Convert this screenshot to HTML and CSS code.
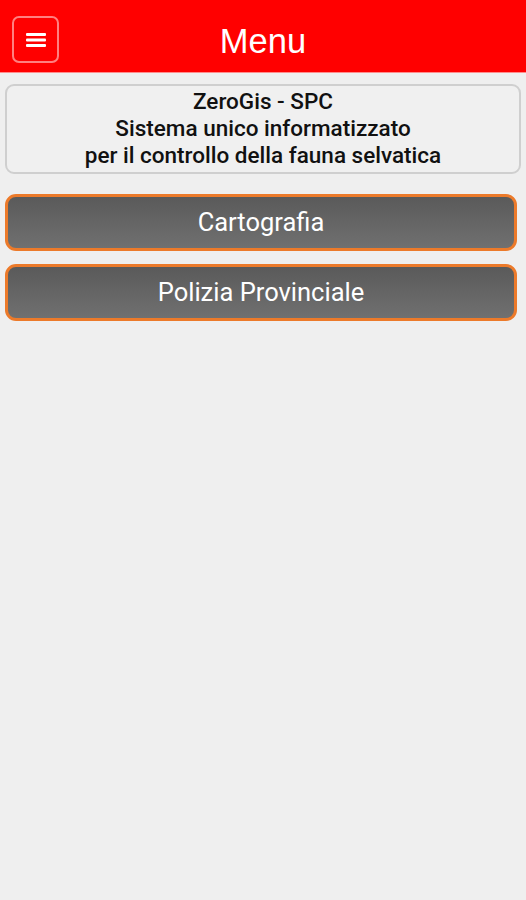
FILE: index.html
```html
<!DOCTYPE html>
<html lang="it">
  <head>
    <meta charset="UTF-8" />
    <meta name="viewport" content="width=device-width,user-scalable=no" />
    <title>Menu</title>
    <link rel="stylesheet" href="styles.css">
  </head>

  <body>
    <div class="header">
      <a class="menu-btn" href="#">
        <svg width="20" height="16" viewBox="0 0 20 16">
          <rect x="0" y="1" width="20" height="3" rx="1" fill="#fff" />
          <rect x="0" y="6.5" width="20" height="3" rx="1" fill="#fff" />
          <rect x="0" y="12" width="20" height="3" rx="1" fill="#fff" />
        </svg>
      </a>
      <h1 class="title">Menu</h1>
    </div>

    <div class="content">
      <div class="info">
        ZeroGis - SPC<br />
        Sistema unico informatizzato<br />
        per il controllo della fauna selvatica
      </div>

      <a class="btn" href="#">Cartografia</a>
      <a class="btn" href="#">Polizia Provinciale</a>
    </div>
  </body>
</html>
```

FILE: styles.css
```css
* {
  margin: 0;
  padding: 0;
  box-sizing: border-box;
}

html,
body {
  height: 100%;
}

body {
  background: #efefef;
  font-family: Roboto, "Liberation Sans", sans-serif;
}

.header {
  position: relative;
  height: 73px;
  padding-top: 11px;
  background: #ff0000;
  border-bottom: 1px solid #ff8c8c;
  display: flex;
  align-items: center;
  justify-content: center;
}

.menu-btn {
  position: absolute;
  left: 12px;
  top: 16px;
  width: 47px;
  height: 47px;
  border: 2px solid #ff8080;
  border-radius: 7px;
  display: flex;
  align-items: center;
  justify-content: center;
}

.title {
  font-family: "Liberation Sans", Arial, sans-serif;
  font-weight: normal;
  font-size: 34.5px;
  color: #fff;
}

.content {
  padding: 11px 5px 0 5px;
}

.info {
  border: 2px solid #cfcfcf;
  border-radius: 9px;
  background: #f0f0f0;
  padding: 2px 0 3px 0;
  text-align: center;
  font-weight: 500;
  font-size: 22.5px;
  line-height: 27px;
  color: #111;
  margin-bottom: 20px;
}

.btn {
  display: block;
  width: 512px;
  height: 57px;
  margin-bottom: 13px;
  border: 3px solid #ec7a2a;
  border-radius: 11px;
  background: linear-gradient(#5a5a5a, #707070);
  color: #fff;
  text-decoration: none;
  text-align: center;
  font-size: 25.5px;
  line-height: 51px;
}
```
